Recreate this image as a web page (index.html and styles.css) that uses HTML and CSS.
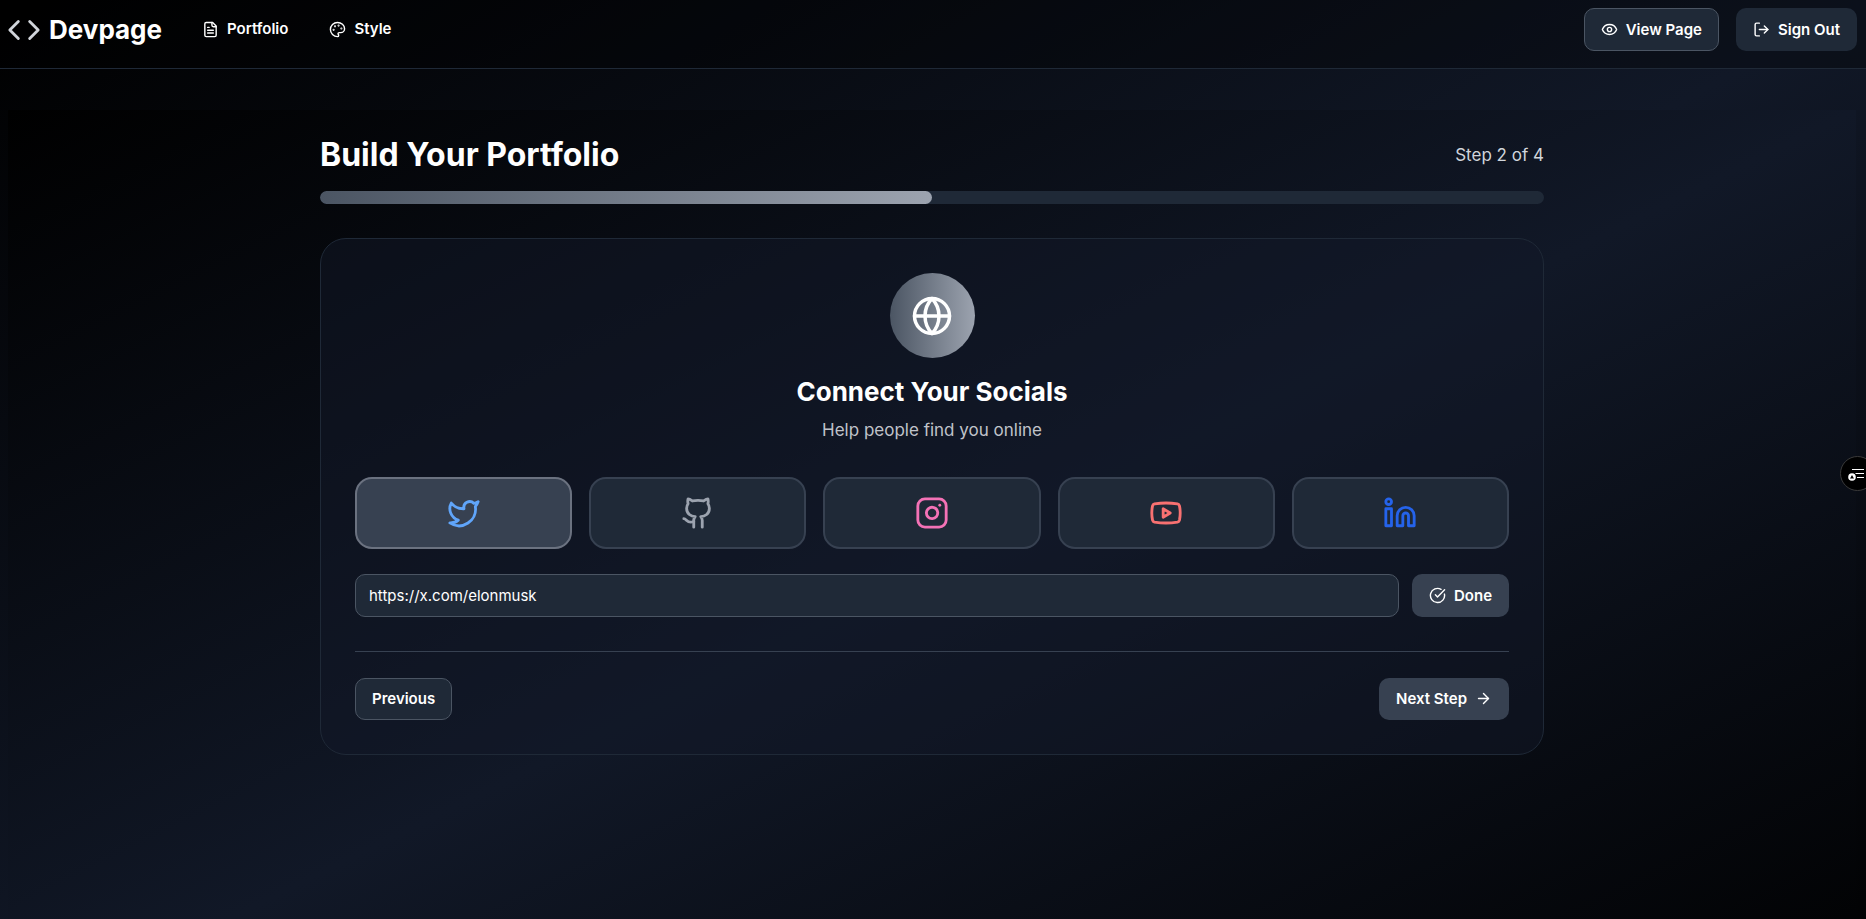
FILE: index.html
```html
<!doctype html>
<html lang="en">
    <head>
        <meta charset="utf-8">
        <meta name="viewport" content="width=device-width, initial-scale=1">
        <title>Devpage</title>
        <link rel="stylesheet" href="styles.css">
    </head>
    <body>

        <header class="navbar">
            <a class="logo" href="#">
                <svg class="icon icon-lg" viewBox="0 0 24 24"><path d="m16 18 6-6-6-6"/><path d="m8 6-6 6 6 6"/></svg>
                Devpage
            </a>
            <nav class="nav-links">
                <a href="#portfolio">
                    <svg class="icon" viewBox="0 0 24 24"><path d="M15 2H6a2 2 0 0 0-2 2v16a2 2 0 0 0 2 2h12a2 2 0 0 0 2-2V7Z"/><path d="M14 2v4a2 2 0 0 0 2 2h4"/><path d="M10 9H8"/><path d="M16 13H8"/><path d="M16 17H8"/></svg>
                    Portfolio
                </a>
                <a href="#style">
                    <svg class="icon" viewBox="0 0 24 24"><circle class="dot" cx="13.5" cy="6.5" r=".5"/><circle class="dot" cx="17.5" cy="10.5" r=".5"/><circle class="dot" cx="8.5" cy="7.5" r=".5"/><circle class="dot" cx="6.5" cy="12.5" r=".5"/><path d="M12 2C6.5 2 2 6.5 2 12s4.5 10 10 10c.926 0 1.648-.746 1.648-1.688 0-.437-.18-.835-.437-1.125-.29-.289-.438-.652-.438-1.125a1.64 1.64 0 0 1 1.668-1.668h1.996c3.051 0 5.555-2.503 5.555-5.554C21.965 6.012 17.461 2 12 2z"/></svg>
                    Style
                </a>
            </nav>
            <div class="nav-actions">
                <button type="button" class="btn btn-outline">
                    <svg class="icon" viewBox="0 0 24 24"><path d="M2.062 12.348a1 1 0 0 1 0-.696 10.75 10.75 0 0 1 19.876 0 1 1 0 0 1 0 .696 10.75 10.75 0 0 1-19.876 0"/><circle cx="12" cy="12" r="3"/></svg>
                    View Page
                </button>
                <button type="button" class="btn btn-dark">
                    <svg class="icon" viewBox="0 0 24 24"><path d="M9 21H5a2 2 0 0 1-2-2V5a2 2 0 0 1 2-2h4"/><path d="m16 17 5-5-5-5"/><path d="M21 12H9"/></svg>
                    Sign Out
                </button>
            </div>
        </header>

        <main class="panel">
            <div class="builder">
                <div class="builder-head">
                    <h1>Build Your Portfolio</h1>
                    <span class="step">Step 2 of 4</span>
                </div>
                <div class="progress">
                    <div class="progress-fill" style="width: 50%"></div>
                </div>

                <form class="card">
                    <div class="badge">
                        <svg class="icon icon-xl" viewBox="0 0 24 24"><circle cx="12" cy="12" r="10"/><path d="M12 2a14.5 14.5 0 0 0 0 20 14.5 14.5 0 0 0 0-20"/><path d="M2 12h20"/></svg>
                    </div>
                    <h2>Connect Your Socials</h2>
                    <p class="subtitle">Help people find you online</p>

                    <div class="socials">
                        <button type="button" class="social twitter active" aria-label="Twitter">
                            <svg class="icon icon-lg" viewBox="0 0 24 24"><path d="M22 4s-.7 2.1-2 3.4c1.6 10-9.4 17.3-18 11.6 2.2.1 4.4-.6 6-2C3 15.5.5 9.6 3 5c2.2 2.6 5.6 4.1 9 4-.9-4.2 4-6.6 7-3.8 1.1 0 3-1.2 3-1.2z"/></svg>
                        </button>
                        <button type="button" class="social github" aria-label="GitHub">
                            <svg class="icon icon-lg" viewBox="0 0 24 24"><path d="M15 22v-4a4.8 4.8 0 0 0-1-3.5c3 0 6-2 6-5.5.08-1.25-.27-2.48-1-3.5.28-1.15.28-2.35 0-3.5 0 0-1 0-3 1.5-2.64-.5-5.36-.5-8 0C6 2 5 2 5 2c-.3 1.15-.3 2.35 0 3.5A5.403 5.403 0 0 0 4 9c0 3.5 3 5.5 6 5.5-.39.49-.68 1.05-.85 1.65-.17.6-.22 1.23-.15 1.85v4"/><path d="M9 18c-4.51 2-5-2-7-2"/></svg>
                        </button>
                        <button type="button" class="social instagram" aria-label="Instagram">
                            <svg class="icon icon-lg" viewBox="0 0 24 24"><rect width="20" height="20" x="2" y="2" rx="5"/><path d="M16 11.37A4 4 0 1 1 12.63 8 4 4 0 0 1 16 11.37z"/><path d="M17.5 6.5h.01"/></svg>
                        </button>
                        <button type="button" class="social youtube" aria-label="YouTube">
                            <svg class="icon icon-lg" viewBox="0 0 24 24"><path d="M2.5 17a24.12 24.12 0 0 1 0-10 2 2 0 0 1 1.4-1.4 49.56 49.56 0 0 1 16.2 0A2 2 0 0 1 21.5 7a24.12 24.12 0 0 1 0 10 2 2 0 0 1-1.4 1.4 49.55 49.55 0 0 1-16.2 0A2 2 0 0 1 2.5 17"/><path d="m10 15 5-3-5-3z"/></svg>
                        </button>
                        <button type="button" class="social linkedin" aria-label="LinkedIn">
                            <svg class="icon icon-lg" viewBox="0 0 24 24"><path d="M16 8a6 6 0 0 1 6 6v7h-4v-7a2 2 0 0 0-4 0v7h-4v-7a6 6 0 0 1 6-6z"/><rect width="4" height="12" x="2" y="9"/><circle cx="4" cy="4" r="2"/></svg>
                        </button>
                    </div>

                    <div class="link-row">
                        <input class="link-input" type="text" aria-label="Profile link" value="https://x.com/elonmusk">
                        <button type="button" class="btn btn-primary">
                            <svg class="icon" viewBox="0 0 24 24"><path d="M21.801 10A10 10 0 1 1 17 3.335"/><path d="m9 11 3 3L22 4"/></svg>
                            Done
                        </button>
                    </div>

                    <div class="card-footer">
                        <button type="button" class="btn btn-outline">Previous</button>
                        <button type="button" class="btn btn-primary">
                            Next Step
                            <svg class="icon" viewBox="0 0 24 24"><path d="M5 12h14"/><path d="m12 5 7 7-7 7"/></svg>
                        </button>
                    </div>
                </form>
            </div>
        </main>

        <button type="button" class="side-widget" aria-label="Open side menu">
            <svg viewBox="0 0 16 14"><path class="line" d="M4 2.5h12M7.500 6.500h8.500M9 10.500h7"/><circle cx="4" cy="10" r="3.800"/><path class="mark" d="M4 8l2 3.500H2z"/></svg>
        </button>

    </body>
</html>
```
FILE: styles.css
```css
* {
    box-sizing: border-box;
}

body {
    margin: 0;
    min-height: 100vh;
    display: flex;
    flex-direction: column;
    font-family: Inter, "Liberation Sans", sans-serif;
    font-size: 17px;
    line-height: 26px;
    color: #fff;
    background: #000 linear-gradient(to bottom right, #000, #111827, #000) no-repeat;
    background-size: 100% calc(100vh + 110px);
}

h1, h2, p {
    margin: 0;
}

a {
    color: inherit;
    text-decoration: none;
}

.icon {
    width: 17px;
    height: 17px;
    flex: none;
    fill: none;
    stroke: currentColor;
    stroke-width: 2;
    stroke-linecap: round;
    stroke-linejoin: round;
}

.icon .dot {
    fill: currentColor;
}

.icon-lg {
    width: 34px;
    height: 34px;
}

.icon-xl {
    width: 42px;
    height: 42px;
}

/* top bar */
.navbar {
    display: flex;
    align-items: center;
    padding: 8px 9px 17px 7px;
    border-bottom: 1px solid #1f2937;
    background: rgba(0, 0, 0, 0.3);
}

.logo {
    display: flex;
    align-items: center;
    gap: 8px;
    font-size: 26px;
    font-weight: 700;
}

.logo .icon {
    color: #d1d5db;
}

.nav-links {
    display: flex;
    gap: 41px;
    margin-left: 40px;
    padding-bottom: 1px;
    font-size: 15px;
    font-weight: 600;
}

.nav-links a {
    display: flex;
    align-items: center;
    gap: 8px;
}

.nav-actions {
    display: flex;
    gap: 17px;
    margin-left: auto;
}

.btn {
    display: inline-flex;
    align-items: center;
    gap: 8px;
    min-height: 43px;
    padding: 0 17px 1px;
    border: 0;
    border-radius: 10px;
    font: 600 15px/21px Inter, "Liberation Sans", sans-serif;
    color: #fff;
    cursor: pointer;
}

.btn-outline {
    padding: 0 16px 1px;
    border: 1px solid #4b5563;
    background: #1f2937;
}

.btn-dark {
    background: #1f2937;
}

.btn-primary {
    background: #374151;
}

/* builder */
.panel {
    flex: 1;
    margin: 41px 10px 0 8px;
    padding: 25px 0 34px;
    background: linear-gradient(to bottom right, #000, #111827, #000) no-repeat;
    background-size: 100% 100vh;
}

.builder {
    max-width: 1224px;
    margin: 0 auto;
}

.builder-head {
    display: flex;
    justify-content: space-between;
    align-items: center;
    margin-bottom: 16px;
}

h1 {
    font-size: 32px;
    line-height: 40px;
    font-weight: 700;
}

.step {
    color: #d1d5db;
}

.progress {
    height: 13px;
    margin-bottom: 34px;
    border-radius: 7px;
    background: #1f2937;
    overflow: hidden;
}

.progress-fill {
    height: 100%;
    border-radius: 7px;
    background: linear-gradient(to right, #4b5563, #9ca3af);
}

.card {
    padding: 34px;
    border: 1px solid #1f2937;
    border-radius: 26px;
    background: rgba(17, 24, 39, 0.5);
    text-align: center;
}

.badge {
    display: flex;
    align-items: center;
    justify-content: center;
    width: 85px;
    height: 85px;
    margin: 0 auto 17px;
    border-radius: 50%;
    background: linear-gradient(to right, #4b5563, #9ca3af);
}

h2 {
    margin-bottom: 8px;
    font-size: 26px;
    line-height: 34px;
    font-weight: 700;
}

.subtitle {
    margin-bottom: 34px;
    color: #c0c3ca;
}

.socials {
    display: grid;
    grid-template-columns: repeat(5, 1fr);
    gap: 17px;
    margin-bottom: 25px;
}

.social {
    display: flex;
    justify-content: center;
    padding: 17px;
    border: 2px solid #374151;
    border-radius: 17px;
    background: #1f2937;
    cursor: pointer;
}

.social.active {
    border-color: #6b7280;
    background: #374151;
}

.twitter { color: #60a5fa; }
.github { color: #9ca3af; }
.instagram { color: #f472b6; }
.youtube { color: #f87171; }
.linkedin { color: #2563eb; }

.link-row {
    display: flex;
    gap: 13px;
    margin-bottom: 34px;
}

.link-input {
    flex: 1;
    min-width: 0;
    padding: 0 13px 1px;
    border: 1px solid #4b5563;
    border-radius: 10px;
    background: #1f2937;
    font: 400 15px/21px Inter, "Liberation Sans", sans-serif;
    color: #fff;
}

.card-footer {
    display: flex;
    justify-content: space-between;
    padding-top: 26px;
    border-top: 1px solid #374151;
}

.card-footer .btn {
    min-height: 42px;
}

/* round button that peeks in from the right edge */
.side-widget {
    position: fixed;
    top: 456px;
    right: -9px;
    width: 35px;
    height: 35px;
    padding: 0 0 0 7px;
    border: 1px solid #3a3a3a;
    border-radius: 50%;
    background: #000;
}

.side-widget svg {
    display: block;
    width: 16px;
    height: 14px;
    fill: #fff;
}

.side-widget .line {
    stroke: #fff;
    stroke-width: 1;
}

.side-widget .mark {
    fill: #000;
}
```
